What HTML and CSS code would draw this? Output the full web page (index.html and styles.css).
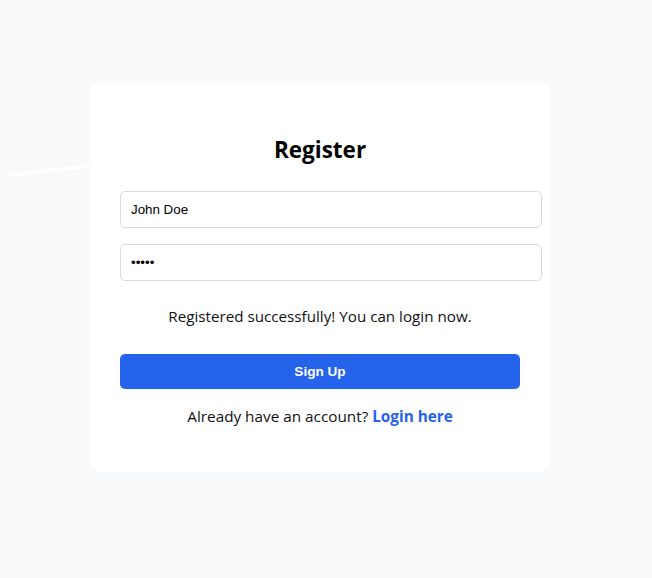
FILE: index.html
```html
<!DOCTYPE html>
<html lang="en">
<head>
<meta charset="utf-8">
<title>Register</title>
<link rel="stylesheet" href="styles.css">
</head>
<body>
<div class="page">
  <div class="streak"></div>
  <div class="card">
    <h2 class="title">Register</h2>
    <form class="form">
      <input class="field" type="text" value="John Doe">
      <input class="field" type="password" value="12345">
      <p class="message">Registered successfully! You can login now.</p>
      <button class="submit" type="button">Sign Up</button>
    </form>
    <p class="footer">Already have an account? <a class="link" href="#">Login here</a></p>
  </div>
</div>
</body>
</html>
```

FILE: styles.css
```css
html, body {
  margin: 0;
  padding: 0;
  background: #f8f9fb;
}
.page {
  position: relative;
  min-height: 578px;
  padding: 81px 0 0 90px;
  box-sizing: border-box;
}
.streak {
  position: absolute;
  left: 8px;
  top: 173px;
  width: 200px;
  height: 4px;
  background: #ffffff;
  border-radius: 2px;
  transform-origin: 0 50%;
  transform: rotate(-6.3deg);
}
.card {
  position: relative;
  z-index: 1;
  width: 400px;
  padding: 55px 30px 45px;
  background: #ffffff;
  border-radius: 12px;
  font-family: "Open Sans", sans-serif;
  color: #111;
}
.title {
  margin: 0;
  text-align: center;
  font-size: 22.5px;
  line-height: 28px;
  font-weight: 700;
  color: #000;
}
.form {
  display: flex;
  flex-direction: column;
  align-items: flex-start;
  margin-top: 27px;
}
.field {
  width: 100%;
  padding: 10px;
  border: 1px solid #dcdcdc;
  border-radius: 5px;
  font-family: "Liberation Sans", Arial, sans-serif;
  font-size: 13.33px;
  line-height: 15px;
  color: #000;
  background: #fff;
  margin: 0 0 16px;
}
.message {
  align-self: stretch;
  margin: 8px 0 27px;
  text-align: center;
  font-size: 15.2px;
  line-height: 22px;
}
.submit {
  align-self: stretch;
  height: 35px;
  border: none;
  border-radius: 5px;
  background: #2563eb;
  color: #fff;
  font-family: "Liberation Sans", Arial, sans-serif;
  font-size: 13.6px;
  font-weight: 700;
}
.footer {
  margin: 16px 0 0;
  text-align: center;
  font-size: 15.3px;
  line-height: 22px;
}
.link {
  color: #2563eb;
  font-weight: 700;
  text-decoration: none;
}
```
